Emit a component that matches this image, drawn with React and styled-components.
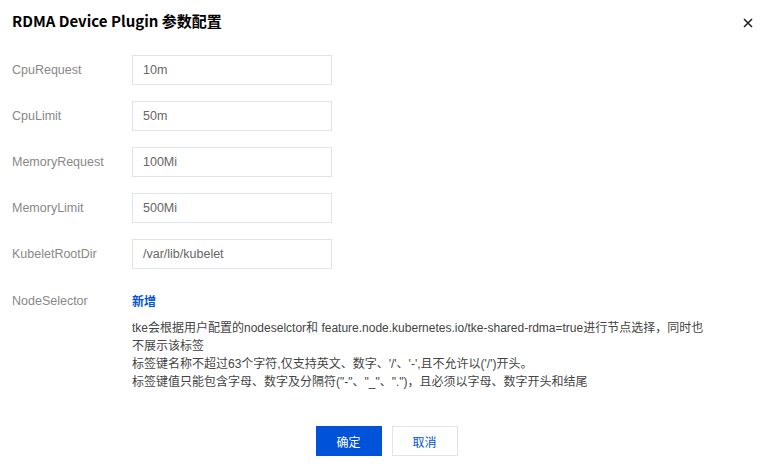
import React from "react";
import styled, { createGlobalStyle } from "styled-components";

const GlobalStyle = createGlobalStyle`
  html, body {
    margin: 0;
    padding: 0;
    background: #fff;
  }
  body {
    font-family: "Liberation Sans", "Noto Sans CJK SC", sans-serif;
    -webkit-font-smoothing: antialiased;
  }
`;

const fields = [
  { label: "CpuRequest", value: "10m" },
  { label: "CpuLimit", value: "50m" },
  { label: "MemoryRequest", value: "100Mi" },
  { label: "MemoryLimit", value: "500Mi" },
  { label: "KubeletRootDir", value: "/var/lib/kubelet" },
];

const tips = [
  "tke会根据用户配置的nodeselctor和 feature.node.kubernetes.io/tke-shared-rdma=true进行节点选择，同时也不展示该标签",
  "标签键名称不超过63个字符,仅支持英文、数字、'/'、'-',且不允许以('/')开头。",
  '标签键值只能包含字母、数字及分隔符("-"、"_"、".")，且必须以字母、数字开头和结尾',
];

const App = () => {
  return (
    <>
      <GlobalStyle />
      <Dialog>
        <Header>
          <Title>RDMA Device Plugin 参数配置</Title>
          <Close aria-label="close">
            <svg width="10" height="10" viewBox="0 0 10 10">
              <path d="M1 1L9 9M9 1L1 9" stroke="#222" strokeWidth="1.6" />
            </svg>
          </Close>
        </Header>
        <Form>
          {fields.map((f) => (
            <Row key={f.label}>
              <Label>{f.label}</Label>
              <Input defaultValue={f.value} />
            </Row>
          ))}
          <Row $top>
            <Label>NodeSelector</Label>
            <Control>
              <Link>新增</Link>
              <Tips>
                {tips.map((t) => (
                  <p key={t}>{t}</p>
                ))}
              </Tips>
            </Control>
          </Row>
        </Form>
        <Footer>
          <Button $primary>确定</Button>
          <Button>取消</Button>
        </Footer>
      </Dialog>
    </>
  );
};

export default App;

const Dialog = styled.div`
  width: 773px;
  height: 472px;
  box-sizing: border-box;
  padding: 11px 12px 0;
  display: flex;
  flex-direction: column;
`;

const Header = styled.div`
  display: flex;
  align-items: center;
  justify-content: space-between;
  height: 18px;
`;

const Title = styled.h2`
  margin: 0;
  font-size: 15px;
  font-weight: bold;
  color: #000;
  font-family: "Noto Sans CJK SC", sans-serif;
`;

const Close = styled.button`
  border: 0;
  background: none;
  padding: 0;
  margin-right: 8px;
  margin-top: 6px;
  display: flex;
  cursor: pointer;
`;

const Form = styled.div`
  margin-top: 26px;
  display: flex;
  flex-direction: column;
  gap: 16px;
`;

const Row = styled.div`
  display: flex;
  align-items: ${(p) => (p.$top ? "flex-start" : "center")};
  padding-top: ${(p) => (p.$top ? "7px" : "0")};
`;

const Label = styled.label`
  width: 120px;
  flex-shrink: 0;
  font-size: 12.5px;
  color: #888;
  line-height: 18px;
`;

const Input = styled.input`
  width: 200px;
  height: 30px;
  box-sizing: border-box;
  border: 1px solid #dfe3ea;
  border-radius: 0;
  padding: 0 10px;
  font-size: 12.5px;
  font-family: inherit;
  color: #666;
  outline: none;
`;

const Control = styled.div`
  display: flex;
  flex-direction: column;
`;

const Link = styled.a`
  font-size: 12px;
  line-height: 18px;
  font-weight: bold;
  color: #0052d9;
  font-family: "Noto Sans CJK SC", sans-serif;
  cursor: pointer;
`;

const Tips = styled.div`
  margin-top: 9px;
  width: 580px;
  font-size: 12px;
  line-height: 18px;
  color: #444;

  p {
    margin: 0;
  }
`;

const Footer = styled.div`
  margin-top: auto;
  margin-bottom: 16px;
  display: flex;
  justify-content: center;
  gap: 10px;
`;

const Button = styled.button`
  width: 66px;
  height: 30px;
  box-sizing: border-box;
  font-size: 12px;
  font-family: "Noto Sans CJK SC", sans-serif;
  border: 1px solid ${(p) => (p.$primary ? "#0052d9" : "#dfe3ea")};
  background: ${(p) => (p.$primary ? "#0052d9" : "#fff")};
  color: ${(p) => (p.$primary ? "#fff" : "#0052d9")};
  cursor: pointer;
`;
